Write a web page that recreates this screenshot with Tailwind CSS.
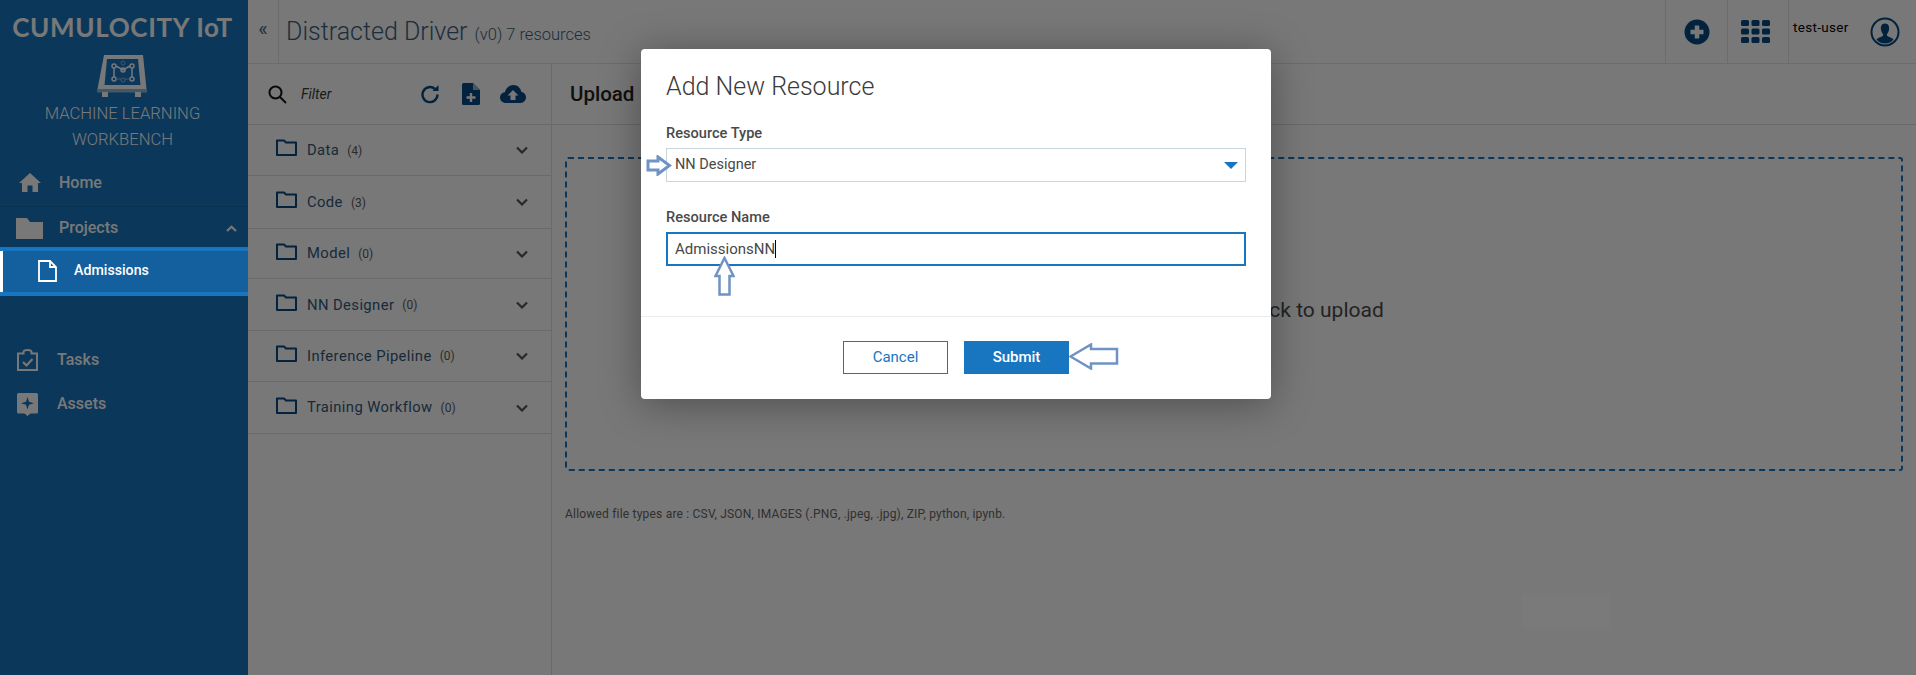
<!DOCTYPE html>
<html lang="en">
  <head>
    <meta charset="UTF-8" />
    <title>Machine Learning Workbench</title>
    <script src="https://cdn.jsdelivr.net/npm/@tailwindcss/browser@4"></script>
  </head>
  <body class="relative h-[675px] w-[1916px] overflow-hidden bg-white font-['Roboto',sans-serif] text-[#3b3b3b]">
    <div class="flex h-full">
      <!-- Sidebar -->
      <aside class="flex h-full w-[248px] shrink-0 flex-col bg-[#1776bf] text-white">
        <div class="flex h-[54px] items-center justify-center pr-[3px] font-['Lato',sans-serif] text-[26px] font-bold tracking-[0.65px] whitespace-nowrap">CUMULOCITY IoT</div>
        <div class="flex h-[44px] justify-center">
          <svg class="ml-[-4px]" width="50" height="44" viewBox="0 0 50 44">
            <path d="M7 1H46L49.500 35H0.500Z" fill="#fff" />
            <rect x="0" y="35" width="50" height="3.500" fill="#8fbbdf" />
            <rect x="5" y="38" width="6" height="5" fill="#fff" />
            <rect x="38" y="38" width="6" height="5" fill="#fff" />
            <path d="M10 5H41L43.500 31H7.500Z" fill="#1776bf" />
            <g fill="none" stroke="#fff" stroke-width="1.500">
              <circle cx="17" cy="12" r="2" /><circle cx="35" cy="12" r="2" /><circle cx="17" cy="25" r="2" /><circle cx="35" cy="25" r="2" /><circle cx="26" cy="16" r="2" />
              <path d="M19 12L26 16L33 12M17 14V23M35 14V23" />
            </g>
            <g fill="none" stroke="#8fbbdf" stroke-width="1"><circle cx="26" cy="9" r="2" /><circle cx="26" cy="26" r="2" /><path d="M19 25H24M28 25H33" /></g>
          </svg>
        </div>
        <div class="mt-[3px] h-[52px] pr-[3px] text-center text-[16.600px] leading-[26px] font-light">MACHINE LEARNING<br />WORKBENCH</div>
        <nav class="mt-[7px]">
          <div class="flex h-[47px] items-center border-b border-[#1368aa] pb-[1px]">
            <svg class="ml-[19px]" width="22" height="19" viewBox="0 0 22 19" fill="#fff"><path d="M11 0L22 10H19V19H13.500V12.500H8.500V19H3V10H0Z" /></svg>
            <span class="ml-[18px] text-[16px] font-medium">Home</span>
          </div>
          <div class="flex h-[40px] items-center pt-[2px]">
            <svg class="ml-[16px]" width="27" height="21" viewBox="0 0 27 21" fill="#fff"><path d="M0 0H11L14 4H27V21H0Z" /></svg>
            <span class="ml-[16px] flex-1 text-[16px] font-medium">Projects</span>
            <svg class="mr-[11px]" width="11" height="7" viewBox="0 0 11 7" fill="none" stroke="#fff" stroke-width="2.200"><path d="M1 6L5.500 1.800L10 6" /></svg>
          </div>
          <div class="h-[49px]"></div>
          <div class="h-[42px] border-b border-[#1b7cc7]"></div>
          <div class="flex h-[44px] items-center">
            <svg class="ml-[17px]" width="21" height="22" viewBox="0 0 21 22"><path d="M1 4.500H6.500V3Q6.500 1 10.500 1T14.500 3V4.500H20V21H1Z" fill="none" stroke="#fff" stroke-width="2" /><path d="M6 13L9.500 16.500L15.500 10" fill="none" stroke="#fff" stroke-width="2.200" /></svg>
            <span class="ml-[19px] text-[16px] font-medium">Tasks</span>
          </div>
          <div class="flex h-[44px] items-center">
            <svg class="ml-[17px] mt-[1px]" width="21" height="23" viewBox="0 0 21 23"><path d="M1.500 0H19.500Q21 0 21 1.500V19Q21 20.500 19.500 20.500H13.500L10.500 23L7.500 20.500H1.500Q0 20.500 0 19V1.500Q0 0 1.500 0Z" fill="#fff" /><path d="M10.500 4L12 8.800L17 10.300L12 11.800L10.500 16.500L9 11.800L4 10.300L9 8.800Z" fill="#1776bf" /></svg>
            <span class="ml-[19px] text-[16px] font-medium">Assets</span>
          </div>
        </nav>
        <div class="mt-[123px] border-t border-[#1b7cc7]"></div>
      </aside>

      <main class="flex h-full min-w-0 flex-1 flex-col">
        <!-- Top bar -->
        <header class="flex h-[64px] shrink-0 items-stretch border-b border-[#e6e6e6]">
          <div class="flex w-[31px] items-center justify-center border-r border-[#e6e6e6] pb-[6px] text-[20px] text-[#3d6285]">«</div>
          <div class="flex flex-1 items-baseline pt-[13px] pl-[7px] text-[#3d6285]">
            <span class="text-[25px] font-light">Distracted Driver</span>
            <span class="ml-[7px] text-[16.500px] font-light">(v0) 7 resources</span>
          </div>
          <div class="flex w-[62px] items-center justify-center border-l border-[#e6e6e6]">
            <svg width="26" height="26" viewBox="0 0 26 26"><circle cx="13" cy="13" r="12.500" fill="#054a82" /><path d="M13 6.500V19.500M6.500 13H19.500" stroke="#fff" stroke-width="4.500" /></svg>
          </div>
          <div class="flex w-[61px] items-center justify-center border-l border-[#e6e6e6] pr-[5px]">
            <svg width="29" height="23" viewBox="0 0 29 23" fill="#054a82">
              <rect width="8" height="6" rx="1.500" /><rect x="10.500" width="8" height="6" rx="1.500" /><rect x="21" width="8" height="6" rx="1.500" />
              <rect y="8.500" width="8" height="6" rx="1.500" /><rect x="10.500" y="8.500" width="8" height="6" rx="1.500" /><rect x="21" y="8.500" width="8" height="6" rx="1.500" />
              <rect y="17" width="8" height="6" rx="1.500" /><rect x="10.500" y="17" width="8" height="6" rx="1.500" /><rect x="21" y="17" width="8" height="6" rx="1.500" />
            </svg>
          </div>
          <div class="flex w-[128px] items-center justify-between border-l border-[#e6e6e6] pr-[16px] pl-[4px]">
            <span class="mb-[8px] bg-white text-[13.500px] tracking-[0.3px] text-black">test-user</span>
            <svg width="30" height="30" viewBox="0 0 30 30"><circle cx="15" cy="15" r="13.500" fill="none" stroke="#054a82" stroke-width="2" /><path d="M15 6.500C18.500 6.500 19.500 9.500 19 12.500C18.700 14.500 17.800 16 17 17V18.500C18 20 22 20.500 23.500 22.500C21.500 25 18.500 26.500 15 26.500S8.500 25 6.500 22.500C8 20.500 12 20 13 18.500V17C12.200 16 11.300 14.500 11 12.500C10.500 9.500 11.500 6.500 15 6.500Z" fill="#054a82" /></svg>
          </div>
        </header>

        <div class="flex min-h-0 flex-1">
          <!-- Resource tree -->
          <section class="w-[304px] shrink-0 border-r border-[#e2e2e2]">
            <div class="flex h-[61px] items-center border-b border-[#e2e2e2]">
              <svg class="ml-[20px]" width="19" height="19" viewBox="0 0 19 19" fill="none" stroke="#111" stroke-width="2"><circle cx="7.500" cy="7.500" r="6" /><path d="M12 12L18 18" /></svg>
              <span class="ml-[14px] flex-1 text-[14px] text-[#3a3a3a] italic">Filter</span>
              <svg class="mr-[22px]" width="20" height="19" viewBox="0 0 20 19" fill="none" stroke="#054a82" stroke-width="2.400"><path d="M17.500 9.500A7.500 7.500 0 1 1 15 4" /><path d="M12.500 6H18.500V0Z" fill="#054a82" stroke="none" /></svg>
              <svg class="mr-[20px]" width="18" height="22" viewBox="0 0 18 22"><path d="M1.500 0H11L18 7V20.500Q18 22 16.500 22H1.500Q0 22 0 20.500V1.500Q0 0 1.500 0Z" fill="#054a82" /><path d="M11 0V7H18" fill="#9db4c6" /><path d="M9 10V19M4.500 14.500H13.500" stroke="#fff" stroke-width="2.400" /></svg>
              <svg class="mr-[25px]" width="26" height="18" viewBox="0 0 26 18"><path d="M6 18C2.500 18 0 15.500 0 12.500C0 9.800 2 7.600 4.800 7.300C6 3 9.300 0 13.500 0C17.500 0 20.500 2.800 21.300 6.800C24 7.300 26 9.500 26 12.300C26 15.500 23.500 18 20.500 18Z" fill="#054a82" /><path d="M13 5L18.500 10.500H15.500V15H10.500V10.500H7.500Z" fill="#fff" /></svg>
            </div>
            <div class="flex h-[51px] items-center border-b border-[#e2e2e2] pl-[28px] text-[#35597b]">
              <svg class="mb-[5px]" width="21" height="17" viewBox="0 0 21 17" fill="none" stroke="#054a82" stroke-width="2"><path d="M1 16V1.500H8L10 3.500H20V16Z" stroke-linejoin="round" /></svg>
              <span class="ml-[10px] pt-[1px] text-[14.800px] tracking-[0.4px]">Data</span>
              <span class="ml-[8px] pt-[1px] text-[12px] text-[#5c5c5c]">(4)</span>
              <svg class="mr-[23px] ml-auto" width="12" height="8" viewBox="0 0 12 8" fill="none" stroke="#555" stroke-width="2.200"><path d="M1 1.500L6 6.500L11 1.500" /></svg>
            </div>
            <div class="flex h-[53px] items-center border-b border-[#e2e2e2] pl-[28px] text-[#35597b]">
              <svg class="mb-[5px]" width="21" height="17" viewBox="0 0 21 17" fill="none" stroke="#054a82" stroke-width="2"><path d="M1 16V1.500H8L10 3.500H20V16Z" stroke-linejoin="round" /></svg>
              <span class="ml-[10px] pt-[1px] text-[14.800px] tracking-[0.4px]">Code</span>
              <span class="ml-[8px] pt-[1px] text-[12px] text-[#5c5c5c]">(3)</span>
              <svg class="mr-[23px] ml-auto" width="12" height="8" viewBox="0 0 12 8" fill="none" stroke="#555" stroke-width="2.200"><path d="M1 1.500L6 6.500L11 1.500" /></svg>
            </div>
            <div class="flex h-[50px] items-center border-b border-[#e2e2e2] pl-[28px] text-[#35597b]">
              <svg class="mb-[5px]" width="21" height="17" viewBox="0 0 21 17" fill="none" stroke="#054a82" stroke-width="2"><path d="M1 16V1.500H8L10 3.500H20V16Z" stroke-linejoin="round" /></svg>
              <span class="ml-[10px] text-[14.800px] tracking-[0.4px]">Model</span>
              <span class="ml-[8px] text-[12px] text-[#5c5c5c]">(0)</span>
              <svg class="mr-[23px] ml-auto" width="12" height="8" viewBox="0 0 12 8" fill="none" stroke="#555" stroke-width="2.200"><path d="M1 1.500L6 6.500L11 1.500" /></svg>
            </div>
            <div class="flex h-[52px] items-center border-b border-[#e2e2e2] pl-[28px] text-[#35597b]">
              <svg class="mb-[5px]" width="21" height="17" viewBox="0 0 21 17" fill="none" stroke="#054a82" stroke-width="2"><path d="M1 16V1.500H8L10 3.500H20V16Z" stroke-linejoin="round" /></svg>
              <span class="ml-[10px] pt-[1px] text-[14.800px] tracking-[0.4px]">NN Designer</span>
              <span class="ml-[8px] pt-[1px] text-[12px] text-[#5c5c5c]">(0)</span>
              <svg class="mr-[23px] ml-auto" width="12" height="8" viewBox="0 0 12 8" fill="none" stroke="#555" stroke-width="2.200"><path d="M1 1.500L6 6.500L11 1.500" /></svg>
            </div>
            <div class="flex h-[51px] items-center border-b border-[#e2e2e2] pl-[28px] text-[#35597b]">
              <svg class="mb-[5px]" width="21" height="17" viewBox="0 0 21 17" fill="none" stroke="#054a82" stroke-width="2"><path d="M1 16V1.500H8L10 3.500H20V16Z" stroke-linejoin="round" /></svg>
              <span class="ml-[10px] text-[14.800px] tracking-[0.4px]">Inference Pipeline</span>
              <span class="ml-[8px] text-[12px] text-[#5c5c5c]">(0)</span>
              <svg class="mr-[23px] ml-auto" width="12" height="8" viewBox="0 0 12 8" fill="none" stroke="#555" stroke-width="2.200"><path d="M1 1.500L6 6.500L11 1.500" /></svg>
            </div>
            <div class="flex h-[52px] items-center border-b border-[#e2e2e2] pl-[28px] text-[#35597b]">
              <svg class="mb-[5px]" width="21" height="17" viewBox="0 0 21 17" fill="none" stroke="#054a82" stroke-width="2"><path d="M1 16V1.500H8L10 3.500H20V16Z" stroke-linejoin="round" /></svg>
              <span class="ml-[10px] text-[14.800px] tracking-[0.4px]">Training Workflow</span>
              <span class="ml-[8px] text-[12px] text-[#5c5c5c]">(0)</span>
              <svg class="mr-[23px] ml-auto" width="12" height="8" viewBox="0 0 12 8" fill="none" stroke="#555" stroke-width="2.200"><path d="M1 1.500L6 6.500L11 1.500" /></svg>
            </div>
          </section>

          <!-- Upload panel -->
          <section class="min-w-0 flex-1">
            <div class="flex h-[61px] items-center border-b border-[#e2e2e2] pl-[18px] text-[20.500px] font-medium text-[#222]">Upload</div>
            <div class="mt-[32px] mr-[13px] ml-[13px] flex h-[314px] items-center justify-center rounded-[3px] border-2 border-dashed border-[#1776bf] pb-[7px] text-[21px] text-[#4b4b4b]">Drop files here or click to upload</div>
            <p class="mt-[34px] ml-[13px] text-[12px] tracking-[0.2px] text-[#666]">Allowed file types are : CSV, JSON, IMAGES (.PNG, .jpeg, .jpg), ZIP, python, ipynb.</p>
          </section>
        </div>
      </main>
    </div>

    <!-- Modal backdrop -->
    <div class="absolute inset-0 bg-black/53"></div>
    <div class="absolute top-[595px] left-[1522px] h-[33px] w-[88px] bg-white/2"></div>

    <!-- Selected project row stays above the backdrop -->
    <div class="absolute top-[247px] left-0 flex h-[49px] w-[248px] items-center border-y-[4px] border-[#1776bf] bg-[#14609e] text-white">
      <div class="h-full w-[3px] bg-white"></div>
      <svg class="ml-[35px] mb-[2px]" width="19" height="22" viewBox="0 0 19 22" fill="none" stroke="#fff" stroke-width="1.800"><path d="M1 1H12L18 7V21H1Z" /><path d="M12 1V7H18" /></svg>
      <span class="mb-[2px] ml-[17px] text-[14.200px] font-medium">Admissions</span>
    </div>

    <!-- Add New Resource dialog -->
    <div class="absolute top-[49px] left-[641px] flex h-[350px] w-[630px] flex-col rounded-[4px] bg-white shadow-[0_5px_40px_rgba(0,0,0,0.35)]">
      <div class="px-[25px] pt-[21px]">
        <h2 class="text-[25px] leading-[34px] font-light text-[#3b3b3b]">Add New Resource</h2>
        <label class="mt-[19px] block text-[14.600px] leading-[20px] font-medium text-[#4a4a4a]">Resource Type</label>
        <div class="mt-[5px] flex h-[34px] items-center justify-between border border-[#c9d5dc] pr-[7px] pl-[8px] text-[14.500px] text-[#484848]">
          <span>NN Designer</span>
          <svg width="14" height="7" viewBox="0 0 14 7" fill="#1776bf"><path d="M0 0H14L7 7Z" /></svg>
        </div>
        <label class="mt-[25px] block text-[14.600px] leading-[20px] font-medium text-[#4a4a4a]">Resource Name</label>
        <div class="mt-[5px] flex h-[34px] items-center border-2 border-[#1776bf] pl-[7px] text-[15px] text-[#484848]">
          <span>AdmissionsNN</span><span class="h-[18px] w-px bg-black"></span>
        </div>
      </div>
      <div class="mt-[50px] flex flex-1 justify-center gap-[16px] border-t border-[#ececec] pt-[24px]">
        <button class="h-[33px] w-[105px] border border-[#1776bf] text-[15px] text-[#1776bf]">Cancel</button>
        <button class="h-[33px] w-[105px] bg-[#1776bf] text-[15px] font-medium text-white">Submit</button>
      </div>
    </div>

    <!-- Annotation arrows -->
    <svg class="absolute top-[155px] left-[646px]" width="26" height="21" viewBox="0 0 26 21" fill="#fff" stroke="#6f93c4" stroke-width="3"><path d="M2 6H12V2L23.500 10.500L12 19V15H2Z" /></svg>
    <svg class="absolute top-[256px] left-[714px]" width="21" height="40" viewBox="0 0 21 40" fill="#fff" stroke="#6f93c4" stroke-width="2.500"><path d="M10.500 2L19.500 20H15.500V38.500H5.500V20H1.500Z" /></svg>
    <svg class="absolute top-[343px] left-[1069px]" width="50" height="27" viewBox="0 0 50 27" fill="#fff" stroke="#6f93c4" stroke-width="2.500"><path d="M1.500 13.500L22 1.500V6H48V20.500H22V25.500Z" /></svg>
  </body>
</html>
